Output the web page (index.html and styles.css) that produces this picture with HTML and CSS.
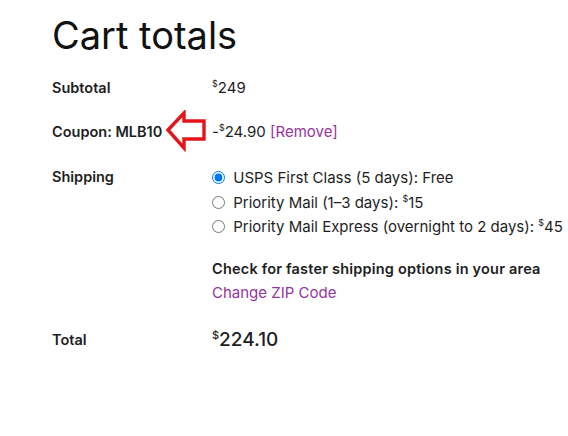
FILE: index.html
```html
<!DOCTYPE html>
<html>
<head>
<meta charset="utf-8">
<link rel="stylesheet" href="styles.css">
</head>
<body>
<div class="cart">
  <h2 class="title">Cart totals</h2>
  <div class="table">
    <div class="label row-subtotal">Subtotal</div>
    <div class="value row-subtotal"><sup class="cur">$</sup>249</div>

    <div class="label row-coupon">Coupon: MLB10</div>
    <div class="value row-coupon">-<sup class="cur">$</sup>24.90 <a class="link" href="#">[Remove]</a></div>

    <div class="label row-shipping">Shipping</div>
    <div class="value row-shipping">
      <ul class="methods">
        <li><label><input type="radio" name="ship" checked> USPS First Class (5 days): Free</label></li>
        <li><label><input type="radio" name="ship"> Priority Mail (1–3 days): <sup class="cur">$</sup>15</label></li>
        <li><label><input type="radio" name="ship"> Priority Mail Express (overnight to 2 days): <sup class="cur">$</sup>45</label></li>
      </ul>
      <p class="dest">Check for faster shipping options in your area</p>
      <a class="link zip" href="#">Change ZIP Code</a>
    </div>

    <div class="label row-total">Total</div>
    <div class="value row-total total"><sup class="cur">$</sup>224.10</div>
  </div>
  <svg class="arrow" width="46" height="44" viewBox="0 0 46 44">
    <polygon points="3,20 19,3 19,11 39,11 39,29 19,29 19,38" fill="none" stroke="#e5141b" stroke-width="3.4" stroke-linejoin="miter"/>
  </svg>
</div>
</body>
</html>
```
FILE: styles.css
```css
html, body {
  margin: 0;
  padding: 0;
  background: #fff;
}
body {
  font-family: "Inter", "Liberation Sans", sans-serif;
  color: #1e1e1e;
  font-size: 15px;
}
.cart {
  position: relative;
  padding: 0 0 0 52px;
}
.title {
  font-size: 38px;
  font-weight: 400;
  margin: 0;
  padding-top: 9px;
  line-height: 52px;
  letter-spacing: 0;
  color: #111;
}
.table {
  display: grid;
  grid-template-columns: 160px 1fr;
  margin-top: 15px;
}
.label {
  font-weight: 600;
  font-size: 14.5px;
}
.label, .value {
  line-height: 22px;
}
.row-subtotal { padding-top: 1px; padding-bottom: 22px; }
.row-coupon { padding-bottom: 23px; }
.cur {
  font-size: 9px;
  vertical-align: 6px;
  line-height: 0;
}
.link {
  color: #9634a0;
  text-decoration: none;
}
.methods {
  list-style: none;
  margin: 0;
  padding: 0;
}
.methods li {
  line-height: 24.5px;
  height: 24.5px;
}
.methods input {
  margin: 0 4px 0 0;
  width: 13px;
  height: 13px;
  vertical-align: -1px;
}
.dest {
  margin: 17px 0 0;
  font-weight: 600;
  font-size: 14.5px;
  line-height: 24px;
  letter-spacing: 0.2px;
}
.zip {
  display: block;
  line-height: 24px;
}
.row-total {
  margin-top: 24px;
}
.total {
  font-size: 19px;
  font-weight: 500;
}
.total .cur {
  font-size: 11px;
  vertical-align: 7px;
}
.arrow {
  position: absolute;
  left: 165px;
  top: 110px;
}
```
